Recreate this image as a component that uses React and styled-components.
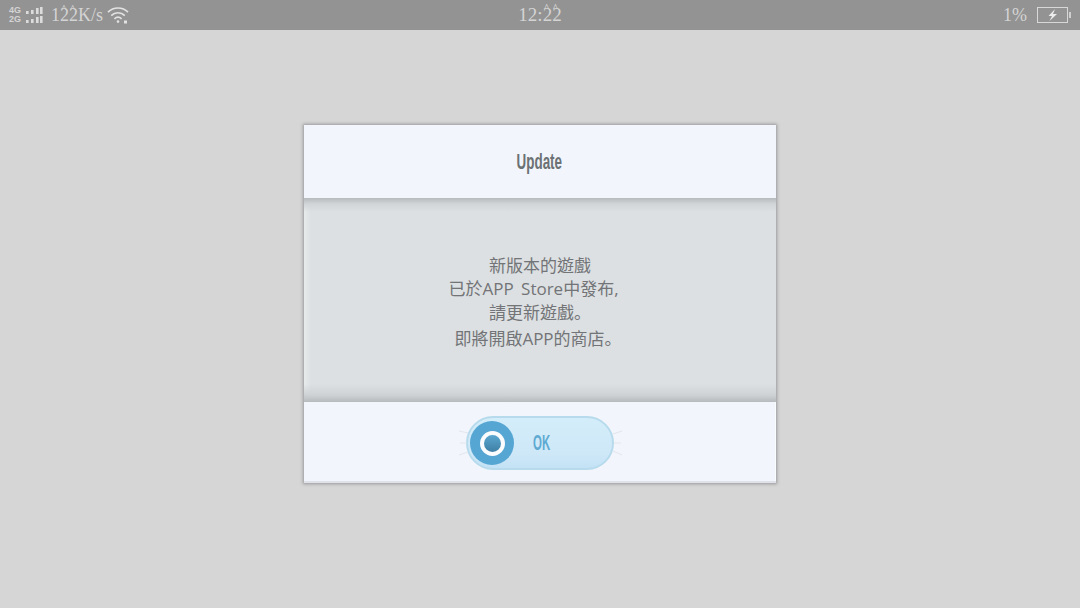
import styled, { createGlobalStyle } from "styled-components"

const GlobalStyle = createGlobalStyle`
    html, body {
        margin: 0;
        padding: 0;
        background-color: #d6d6d6;
    }
`

function SignalIcon() {
    const bars = [
        [0, 4, 3], [5, 3, 4], [10, 1, 6], [14, 0, 7],
        [0, 13, 3], [5, 12, 4], [10, 10, 6], [14, 9, 7],
    ]
    return (
        <svg width="17" height="16" viewBox="0 0 17 16">
            {bars.map(([x, y, h], i) => (
                <rect key={i} x={x} y={y} width="2.6" height={h} fill="#dcdcdc" />
            ))}
        </svg>
    )
}

function WifiIcon() {
    return (
        <svg width="22" height="18" viewBox="0 0 22 18" fill="none" stroke="#e2e2e2" strokeWidth="1.7">
            <path d="M1 6.2C6.5 .6 15.5 .6 21 6.2" />
            <path d="M4.2 9.6C8 5.8 14 5.8 17.8 9.6" />
            <path d="M7.4 12.8C9.5 10.9 12.5 10.9 14.6 12.8" />
            <circle cx="11" cy="15.6" r="1.3" fill="#e2e2e2" stroke="none" />
            <rect x="17" y="14.5" width="3" height="3" fill="#e2e2e2" stroke="none" />
        </svg>
    )
}

function BatteryIcon() {
    return (
        <svg width="34" height="16" viewBox="0 0 34 16">
            <rect x="0.5" y="0.5" width="30" height="15" fill="none" stroke="#d8d8d8" />
            <rect x="32" y="5" width="2" height="6" fill="#cfcfcf" />
            <path d="M18 2 L11.5 9 H15 L12.5 14 L20 7 H16 Z" fill="#ececec" />
        </svg>
    )
}

function Sparks({ side }) {
    return (
        <SparkWrap $side={side} width="10" height="30" viewBox="0 0 10 30" stroke="#e2e5ea" fill="none">
            {side === "left"
                ? <path d="M0 3 L9 5 M0 27 L9 24 M1 15 H8" />
                : <path d="M10 3 L1 6 M10 27 L1 23 M2 15 H9" />}
        </SparkWrap>
    )
}

export default function App() {
    return (
        <>
            <GlobalStyle />
            <Page>
                <StatusBar>
                    <StatusLeft>
                        <NetworkLabels>
                            <span>4G</span>
                            <span>2G</span>
                        </NetworkLabels>
                        <SignalIcon />
                        <Speed>1<Twos>22</Twos>K/s</Speed>
                        <WifiIcon />
                    </StatusLeft>
                    <Clock>12:<Twos>22</Twos></Clock>
                    <StatusRight>
                        <Percent>1%</Percent>
                        <BatteryIcon />
                    </StatusRight>
                </StatusBar>
                <Stage>
                    <Dialog>
                        <DialogHeader>
                            <Title>Update</Title>
                        </DialogHeader>
                        <DialogBody>
                            <BodyLine>新版本的遊戲</BodyLine>
                            <BodyLine $shift={13}>已於APP Store中發布,</BodyLine>
                            <BodyLine>請更新遊戲<Stop>。</Stop></BodyLine>
                            <BodyLine $shift={4} $gap={3}>即將開啟APP的商店<Stop>。</Stop></BodyLine>
                        </DialogBody>
                        <DialogFooter>
                            <OkButton>
                                <Sparks side="left" />
                                <Knob>
                                    <KnobRing />
                                </Knob>
                                <OkLabel>OK</OkLabel>
                                <Sparks side="right" />
                            </OkButton>
                        </DialogFooter>
                    </Dialog>
                </Stage>
            </Page>
        </>
    )
}

const Page = styled.div`
    width: 1080px;
    height: 608px;
    display: flex;
    flex-direction: column;
    overflow: hidden;
    background-color: #d6d6d6;
`

const StatusBar = styled.div`
    height: 30px;
    flex-shrink: 0;
    display: grid;
    grid-template-columns: 1fr auto 1fr;
    align-items: center;
    padding: 0 9px;
    background-color: #939393;
    color: #d4d4d4;
    font-family: "Liberation Serif", serif;
`

const StatusLeft = styled.div`
    display: flex;
    align-items: center;
`

const NetworkLabels = styled.div`
    display: flex;
    flex-direction: column;
    width: 17px;
    font-family: "Liberation Sans", sans-serif;
    font-size: 9px;
    font-weight: bold;
    line-height: 9px;
`

const Speed = styled.span`
    font-size: 18px;
    margin: 0 4px 0 8px;
`

const Twos = styled.span`
    position: relative;

    &::before {
        content: "^^";
        position: absolute;
        left: 1px;
        top: -2px;
        font-size: 10px;
        font-weight: bold;
        letter-spacing: 3px;
        color: #d4d4d4;
    }
`

const Clock = styled.span`
    font-size: 19px;
`

const Percent = styled.span`
    font-size: 18px;
    margin-right: 10px;
`

const StatusRight = styled.div`
    display: flex;
    align-items: center;
    justify-content: flex-end;
`

const Stage = styled.div`
    flex: 1;
    display: flex;
    justify-content: center;
    padding-top: 95px;
`

const Dialog = styled.div`
    width: 472px;
    height: 358px;
    display: flex;
    flex-direction: column;
    background-color: #f2f6fc;
    box-shadow: 0 0 3px 1px rgba(90, 90, 95, 0.5);
`

const DialogHeader = styled.div`
    height: 73px;
    display: flex;
    align-items: center;
    justify-content: center;
`

const Title = styled.h1`
    margin: 0 2px 0 0;
    font-family: "Liberation Sans", sans-serif;
    font-size: 22px;
    font-weight: bold;
    color: #6c7174;
    transform: scaleX(0.61);
`

const DialogBody = styled.div`
    height: 204px;
    box-sizing: border-box;
    padding-top: 56px;
    background:
        linear-gradient(#b7babd 0, #d2d5d7 6px, rgba(221, 224, 226, 0) 14px),
        linear-gradient(0deg, #b7babd 0, #cfd2d4 7px, rgba(221, 224, 226, 0) 18px),
        linear-gradient(90deg, #e8ebec 0, #dde0e2 7px),
        #dde0e2;
    font-family: "Open Sans", "Noto Sans CJK TC", sans-serif;
    font-size: 17px;
    line-height: 23px;
    word-spacing: 3px;
    color: #727477;
    text-align: center;
`

const BodyLine = styled.p`
    margin: 0;
    height: 23px;
    padding-right: ${({ $shift }) => $shift || 0}px;
    position: relative;
    top: ${({ $gap }) => $gap || 0}px;
`

const Stop = styled.span`
    font-family: "Noto Sans CJK JP", sans-serif;
`

const DialogFooter = styled.div`
    flex: 1;
    display: flex;
    justify-content: center;
    padding-top: 14px;
    box-shadow: inset 0 -2px 0 #dfe2e8, inset -1px 0 0 #fbfcfe;
`

const OkButton = styled.button`
    position: relative;
    width: 148px;
    height: 54px;
    box-sizing: border-box;
    padding: 0 0 0 2px;
    display: flex;
    align-items: center;
    border: 2px solid #b7dbec;
    border-radius: 27px;
    background: linear-gradient(#d3edfa, #cfe8f8 70%, #c3e2f5);
`

const SparkWrap = styled.svg`
    position: absolute;
    top: 10px;
    ${({ $side }) => ($side === "left" ? "left: -9px;" : "right: -10px;")}
`

const Knob = styled.span`
    width: 44px;
    height: 44px;
    flex-shrink: 0;
    display: flex;
    align-items: center;
    justify-content: center;
    border-radius: 50%;
    background-color: #55a6d2;
`

const KnobRing = styled.span`
    width: 17px;
    height: 17px;
    border: 4px solid #fafcfe;
    border-radius: 50%;
    background: linear-gradient(#5aa7cf, #3f7fa5);
`

const OkLabel = styled.span`
    margin-left: 19px;
    font-family: "Liberation Sans", sans-serif;
    font-size: 22px;
    font-weight: bold;
    color: #5eaad2;
    transform: scaleX(0.52);
    transform-origin: left center;
`
